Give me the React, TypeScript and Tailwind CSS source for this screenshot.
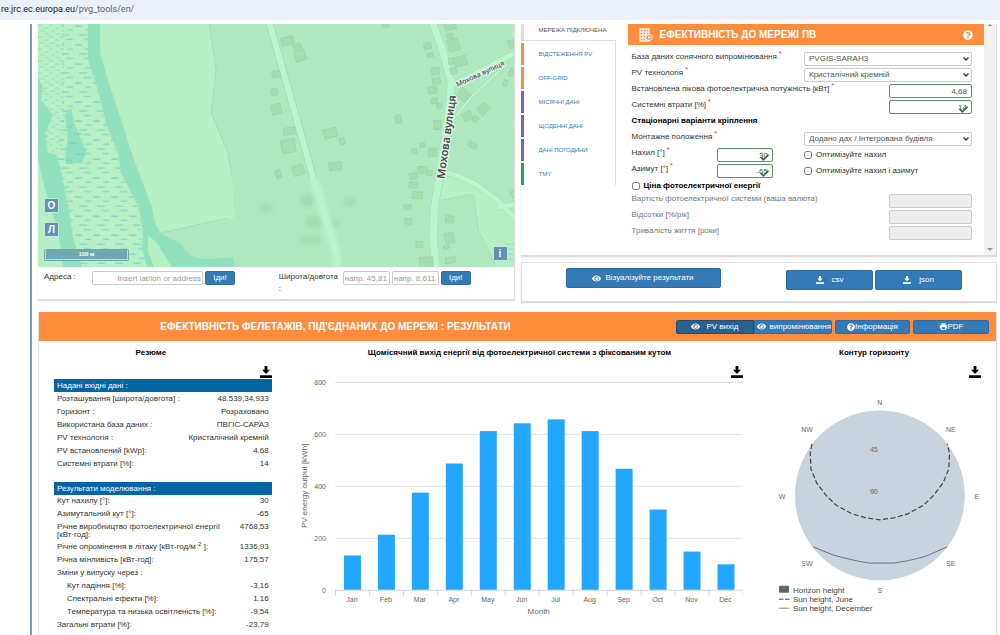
import type { ReactNode } from "react";
import { FaCheck, FaEye, FaQuestionCircle } from "react-icons/fa";
import { MdPrint } from "react-icons/md";

const navItems = [
    { label: "ВІДСТЕЖЕННЯ PV", bar: "bg-[#fb8c3c]" },
    { label: "OFF-GRID", bar: "bg-[#fb8c3c]" },
    { label: "МІСЯЧНІ ДАНІ", bar: "bg-[#7565b0]" },
    { label: "ЩОДЕННІ ДАНІ", bar: "bg-[#7565b0]" },
    { label: "ДАНІ ПОГОДИНИ", bar: "bg-[#7565b0]" },
    { label: "TMY", bar: "bg-[#2ca05a]" },
];

const inputRows = [
    ["Розташування [широта/довгота] :", "48.539,34.933"],
    ["Горизонт :", "Розраховано"],
    ["Використана база даних :", "ПВГІС-САРАЗ"],
    ["PV технологія :", "Кристалічний кремній"],
    ["PV встановлений [kWp]:", "4.68"],
    ["Системні втрати [%]:", "14"],
];

const resultRows: { label: ReactNode; value: string; indent?: boolean }[] = [
    { label: "Кут нахилу [°]:", value: "30" },
    { label: "Азимутальний кут [°]:", value: "-65" },
    { label: "Річне виробництво фотоелектричної енергії [кВт·год]:", value: "4768,53" },
    { label: <>Річне опромінення в літаку [кВт-год/м <sup className="text-[6px]">2</sup> ]:</>, value: "1336,93" },
    { label: "Річна мінливість [кВт-год]:", value: "175,57" },
    { label: "Зміни у випуску через :", value: "" },
    { label: "Кут падіння [%]:", value: "-3,16", indent: true },
    { label: "Спектральні ефекти [%]:", value: "1.16", indent: true },
    { label: "Температура та низька освітленість [%]:", value: "-9,54", indent: true },
    { label: "Загальні втрати [%]:", value: "-23,79" },
];

const months = [
    { name: "Jan", value: 132 },
    { name: "Feb", value: 212 },
    { name: "Mar", value: 374 },
    { name: "Apr", value: 486 },
    { name: "May", value: 611 },
    { name: "Jun", value: 641 },
    { name: "Jul", value: 656 },
    { name: "Aug", value: 611 },
    { name: "Sep", value: 466 },
    { name: "Oct", value: 309 },
    { name: "Nov", value: 147 },
    { name: "Dec", value: 98 },
];

// x, y, width, height, rotation
const buildings = [
    [249, 17, 12, 8, -14], [259, 23, 8, 6, -20], [262, 32, 11, 10, -20],
    [238, 50, 8, 6, -14], [236, 68, 6, 7, -16], [238, 85, 10, 10, -14],
    [251, 107, 11, 7, -8], [250, 122, 14, 13, -10], [260, 146, 11, 10, -16], [240, 150, 5, 8, -16],
    [292, 109, 13, 9, -14], [304, 117, 5, 7, -16], [297, 142, 12, 8, -10], [360, 95, 6, 8, -14],
    [347, 1, 7, 4, -10], [389, 22, 7, 6, -14], [392, 31, 6, 4, -14], [397, 47, 8, 7, -8],
    [398, 57, 8, 6, -8], [394, 66, 9, 7, -8], [396, 77, 6, 5, -8], [401, 82, 5, 5, -8],
    [399, 101, 7, 9, 0], [412, 2, 11, 7, -12], [411, 12, 6, 5, -12], [415, 21, 11, 12, -16],
    [413, 37, 6, 6, -12], [422, 37, 12, 9, -14], [415, 47, 6, 6, -12], [425, 71, 11, 10, 40],
    [445, 85, 11, 9, -45], [429, 92, 9, 8, -30], [437, 95, 5, 6, 40], [434, 121, 9, 5, 30],
    [394, 128, 8, 8, 4], [384, 121, 5, 4, -10], [376, 127, 5, 5, -6], [384, 146, 9, 7, 0],
    [375, 152, 7, 6, -10], [391, 149, 5, 5, 0], [375, 161, 9, 6, 4], [379, 171, 10, 7, 4],
    [369, 183, 7, 5, 4], [370, 197, 7, 6, 4], [381, 220, 7, 6, 0], [388, 238, 13, 10, -4],
    [411, 195, 8, 7, 8], [411, 214, 9, 10, -10], [408, 223, 6, 3, -10], [412, 236, 10, 6, -8],
    [473, 20, 6, 8, -14], [467, 59, 4, 6, 20], [473, 48, 4, 8, 20], [475, 170, 5, 7, -30],
];

function DownloadIcon({ className }: { className: string }) {
    return (
        <svg viewBox="0 0 12 12" className={className} fill="currentColor" aria-hidden="true">
            <path d="M4.6 0h2.8v3.8H10L6 8 2 3.8h2.6zM0 9.2h12V12H0z" />
        </svg>
    );
}

function MapView() {
    return (
        <div className="relative h-[243px] overflow-hidden bg-[#b5efc3]">
            <svg viewBox="0 0 475 243" preserveAspectRatio="xMinYMin slice" className="h-full w-full">
                <defs>
                    <pattern id="marsh" width="18" height="19" patternUnits="userSpaceOnUse">
                        <path d="M1 2h7M11 6h6M5 11h8M10 15.500h7" stroke="#74cfcb" strokeWidth="1" />
                    </pattern>
                    <pattern id="marshDense" width="11" height="12" patternUnits="userSpaceOnUse">
                        <path d="M0 1h4M6 4h4M2 7h4M7 10h4" stroke="#7ed2c6" strokeWidth=".7" />
                    </pattern>
                    <filter id="soft">
                        <feGaussianBlur stdDeviation="2" />
                    </filter>
                </defs>
                <path d="M171 0L178 46L173 89L190 129L194 154L196 194L122 209L142 219L152 231L165 235L195 233L197 243H475V0Z" fill="#afe7c0" />
                <path d="M171 0L178 46L173 89L190 129L194 154M122 209L190 194" fill="none" stroke="#9fd6b0" strokeWidth=".8" />
                <path d="M407 150L440 162L475 190V243H458L440 206L435 170L402 176Z" fill="#b5efc3" />
                <path d="M402 176L435 170L440 206L458 243" fill="none" stroke="#9fd6b0" strokeWidth=".7" />

                <path d="M24 0H50V36L59 63L69 103L80 129L83 149L101 184L104 223L109 243H44L35 213L29 176L19 131L24 90Z" fill="url(#marsh)" />
                <path d="M0 0H26V90L24 130L9 128L7 109L15 91L3 76L5 63L0 54Z" fill="url(#marshDense)" />
                <path d="M0 54L5 63L3 76L15 91L7 109L9 128L19 131L25 156L29 176L35 213L44 243H25L20 206L10 176L0 136Z" fill="#91e1c0" />
                <path d="M33 84L35 96L45 119L48 129L44 139H27L30 109L27 91Z" fill="#91e1c0" />
                <path d="M28 103h6M36 110h8M31 119h8M38 130h8M28 136h6" stroke="#74cfcb" />
                <path d="M50 0H62V29L72 63L84 99L95 133L114 184L117 199L122 209L142 219L152 231L165 235L195 233L197 243H109L104 223L105 211L101 184L83 149L80 129L69 103L59 63L50 36Z" fill="#91e1c0" />
                <path d="M110 211L119 219L134 243H116L110 228Z" fill="#b5efc3" />

                <g fill="#a5ddb2" filter="url(#soft)">
                    <path d="M222 180h12v8h-12zM262 170h14v12h-14zM306 174h12v8h-12zM268 192h16v12h-16zM262 212h20v8h-20zM292 194h8v10h-8z" />
                </g>
                <g fill="none" stroke="#a2dbb4" strokeLinejoin="round">
                    <path d="M231 -2L275 154" strokeWidth="8" />
                    <path d="M394 -2L404 26L413 59L411 80L401 152L396 183L395 216L398 245" strokeWidth="8" />
                    <path d="M414 61L440 48L478 28" strokeWidth="6" />
                    <path d="M405 148L420 152L439 161L459 176L480 198M459 183L480 180" strokeWidth="6" />
                    <path d="M414 96L432 74L465 43" strokeWidth="3" />
                </g>
                <g fill="none" stroke="#b9f5ce" strokeLinejoin="round">
                    <path d="M231 -2L275 154" strokeWidth="6" />
                    <path d="M275 154L285 186L297 226L300 243" strokeWidth="8" filter="url(#soft)" />
                    <path d="M394 -2L404 26L413 59L411 80L401 152L396 183L395 216L398 245" strokeWidth="7" />
                    <path d="M414 61L440 48L478 28" strokeWidth="5" />
                    <path d="M405 148L420 152L439 161L459 176L480 198M459 183L480 180" strokeWidth="5" />
                    <path d="M414 96L432 74L465 43" strokeWidth="2" />
                </g>
                <g fill="#a5dfb1" stroke="#9bd0a6" strokeWidth=".7">
                    {buildings.map(([x, y, w, h, r], i) => (
                        <rect key={i} x={x - w / 2} y={y - h / 2} width={w} height={h} transform={`rotate(${r} ${x} ${y})`} />
                    ))}
                </g>
                <path d="M467 220h8M465 225h10M468 230h7M466 235h9" stroke="#7fd6c4" strokeWidth=".8" />
                <g className="font-['Noto_Sans',sans-serif]" fill="#4c4750" stroke="#e6f8ea" strokeWidth="2" paintOrder="stroke">
                    <text x="419" y="63" fontSize="7" fontWeight="500" transform="rotate(-25 419 63)">Мохова вулиця</text>
                    <text x="406" y="155" fontSize="11" fontWeight="600" transform="rotate(-82 406 155)">Мохова вулиця</text>
                </g>
            </svg>
            <button className="absolute top-[174px] left-1.5 size-[15px] rounded-xs border border-[#c5e6dc] bg-[#5e93b4] text-[10px] leading-3 font-bold text-white">О</button>
            <button className="absolute top-[198px] left-1.5 size-[15px] rounded-xs border border-[#c5e6dc] bg-[#5e93b4] text-[10px] leading-3 font-bold text-white">Л</button>
            <div className="absolute bottom-1.5 left-1.5 w-[85px] rounded-xs bg-[#6fa9b0] p-px">
                <div className="border border-t-0 border-[#b5dcd8] text-center text-[6px] leading-[9px] font-bold text-white">100 м</div>
            </div>
            <button className="absolute right-1.5 bottom-1.5 size-[15px] rounded-xs border border-[#c5e6dc] bg-[#5e93b4] text-[10px] leading-3 font-bold text-white">i</button>
        </div>
    );
}

function Star() {
    return <sup className="ml-0.5 text-[7px] text-[#d03a2e]">*</sup>;
}

function SelectRow({ id, label, value }: { id: string; label: string; value: string }) {
    return (
        <div className="grid h-4 grid-cols-[1fr_168px]">
            <label htmlFor={id} className="leading-3">{label}<Star /></label>
            <div className="relative">
                <select id={id} className="mt-px block h-[14px] w-full appearance-none rounded-xs border border-[#ccc] bg-white pl-1 text-[#555]">
                    <option>{value}</option>
                </select>
                <svg viewBox="0 0 6 4" className="pointer-events-none absolute top-1.5 right-[3px] h-1 w-1.5" fill="none" stroke="#333" strokeWidth="1.3">
                    <path d="M.5 .5L3 3L5.500 .5" />
                </svg>
            </div>
        </div>
    );
}

function ValidInput({ id, value, width, checked }: { id: string; value: string; width: string; checked?: boolean }) {
    return (
        <div className={`relative ${width}`}>
            <input id={id} defaultValue={value} className="mt-px block h-[14px] w-full rounded-xs border border-[#5d9463] bg-white px-1 text-right text-[#555]" />
            {checked && <FaCheck className="absolute top-1.5 right-1 size-[9px] text-[#2f7d3b]" />}
        </div>
    );
}

function NavTabs() {
    return (
        <nav className="w-[95px] shrink-0 text-[6px]">
            <a href="#grid" className="flex h-[17px] text-[#555]">
                <span className="w-[3px] bg-[#ddd]" />
                <span className="flex-1 border-b border-[#ddd] pl-[15px] leading-3 whitespace-nowrap">МЕРЕЖА ПІДКЛЮЧЕНА</span>
            </a>
            <div className="border-r border-[#ddd]">
                {navItems.map((item) => (
                    <a key={item.label} href="#tool" className="flex h-6 pt-0.5 text-[#337ab7]">
                        <span className={`w-[3px] ${item.bar}`} />
                        <span className="pl-[15px] leading-[22px] whitespace-nowrap">{item.label}</span>
                    </a>
                ))}
            </div>
        </nav>
    );
}

function PvForm() {
    return (
        <div className="min-w-0 flex-1">
            <div className="flex h-[21px] items-center bg-[#ff8c3c] px-[11px] text-white">
                <svg viewBox="0 0 14 14" className="size-[14px]" fill="none" stroke="currentColor">
                    <path d="M1 1h9v12H1zM1 4h9M1 7h9M1 10h9M4 1v12M7 1v12" strokeWidth="1.300" opacity=".9" />
                    <circle cx="10" cy="9.500" r="3.200" fill="#ff8c3c" />
                    <path d="M9 7.500v4l3-2z" fill="currentColor" stroke="none" />
                </svg>
                <h2 className="ml-[7px] flex-1 text-[10px] font-bold">ЕФЕКТИВНІСТЬ ДО МЕРЕЖІ ПВ</h2>
                <FaQuestionCircle className="size-[10px]" />
            </div>
            <form className="pt-1.5 pr-3 pb-3.5 pl-1 text-[8px] text-[#333]">
                <SelectRow id="db" label="База даних сонячного випромінювання" value="PVGIS-SARAH3" />
                <SelectRow id="tech" label="PV технологія" value="Кристалічний кремній" />
                <div className="flex h-4 justify-between">
                    <label htmlFor="peak" className="leading-3">Встановлена пікова фотоелектрична потужність [кВт]<Star /></label>
                    <ValidInput id="peak" value="4,68" width="w-[83px]" />
                </div>
                <div className="flex h-4 justify-between">
                    <label htmlFor="loss" className="leading-3">Системні втрати [%]<Star /></label>
                    <ValidInput id="loss" value="14" width="w-[83px]" checked />
                </div>
                <h3 className="h-4 leading-3 font-bold text-black">Стаціонарні варіанти кріплення</h3>
                <SelectRow id="mount" label="Монтажне положення" value="Додано дах / Інтегрована будівля" />
                <div className="grid h-4 grid-cols-[1fr_168px]">
                    <div className="flex justify-between pr-[31px]">
                        <label htmlFor="slope" className="leading-3">Нахил [°]<Star /></label>
                        <ValidInput id="slope" value="30" width="w-14" checked />
                    </div>
                    <label className="flex items-center gap-1">
                        <input type="checkbox" className="size-2" />
                        Оптимізуйте нахил
                    </label>
                </div>
                <div className="grid h-4 grid-cols-[1fr_168px]">
                    <div className="flex justify-between pr-[31px]">
                        <label htmlFor="azimuth" className="leading-3">Азимут [°]<Star /></label>
                        <ValidInput id="azimuth" value="-65" width="w-14" checked />
                    </div>
                    <label className="flex items-center gap-1">
                        <input type="checkbox" className="size-2" />
                        Оптимізуйте нахил і азимут
                    </label>
                </div>
                <label className="flex h-[14px] items-center gap-1 font-bold text-black">
                    <input type="checkbox" className="size-2" />
                    Ціна фотоелектричної енергії
                </label>
                {["Вартість фотоелектричної системи (ваша валюта)", "Відсотки [%/рік]", "Тривалість життя [роки]"].map((label) => (
                    <label key={label} className="flex h-4 justify-between leading-3 text-[#777]">
                        {label}
                        <input disabled className="mt-px h-[14px] w-[83px] rounded-xs border border-[#ccc] bg-[#eee]" />
                    </label>
                ))}
            </form>
        </div>
    );
}

function MonthlyChart() {
    const slot = 34;
    return (
        <svg viewBox="0 0 448 240" className="w-full" fill="#666">
            {[0, 200, 400, 600, 800].map((v) => (
                <g key={v}>
                    <path d={`M39 ${211.5 - v * 0.26}H447`} stroke={v ? "#e3e3e3" : "#ccd6eb"} />
                    <text x="30" y={214 - v * 0.26} fontSize="7" textAnchor="end">{v}</text>
                </g>
            ))}
            {months.map((m, i) => (
                <g key={m.name}>
                    <path d={`M${39.5 + i * slot} 211v6`} stroke="#ccd6eb" />
                    <rect x={48 + i * slot} y={211 - m.value * 0.26} width="17" height={m.value * 0.26} fill="#22a7ff" />
                    <text x={56 + i * slot} y="223" fontSize="7" textAnchor="middle">{m.name}</text>
                </g>
            ))}
            <path d="M447.500 211v6" stroke="#ccd6eb" />
            <text x="243" y="235" fontSize="8" textAnchor="middle">Month</text>
            <text x="11" y="107" fontSize="8" textAnchor="middle" transform="rotate(-90 11 107)">PV energy output [kWh]</text>
        </svg>
    );
}

const compass: [string, number, number][] = [
    ["N", 113, 26], ["NE", 184, 53], ["E", 210, 120], ["SE", 184, 187],
    ["S", 113, 214], ["SW", 40, 187], ["W", 15, 120], ["NW", 40, 53],
    ["45", 107, 73], ["90", 107, 115],
];

function HorizonChart() {
    return (
        <svg viewBox="0 0 214 240" className="w-full" fill="#666">
            <circle cx="113" cy="116.500" r="85" fill="#c8d3dd" />
            <path d="M45 65L43.300 74L44 90L49.700 104L58.700 116L68.700 126L85 135L99 139L113 141L127 139L141 135L157.300 126L167.300 116L176.300 104L182 90L182.700 74L180.300 65" fill="none" stroke="#444" strokeWidth="1.200" strokeDasharray="5 2.500" />
            <path d="M46 168L57 172.500L67 176.500L87 181.500L102 184.300H127L142 181.800L159 177.500L180.500 168" fill="none" stroke="#6b7580" />
            {compass.map(([label, x, y]) => (
                <text key={label} x={x} y={y} fontSize="7" textAnchor="middle">{label}</text>
            ))}
            <path d="M12 207h10v7H12z" />
            <path d="M12 220.500h4.500M18 220.500h4.500" stroke="#444" />
            <path d="M12 229.500h10" stroke="#999" />
            <g fontSize="8" fill="#444">
                <text x="26" y="214">Horizon height</text>
                <text x="26" y="223">Sun height, June</text>
                <text x="26" y="232">Sun height, December</text>
            </g>
        </svg>
    );
}

function Summary() {
    return (
        <>
            <table className="w-full">
                <thead>
                    <tr className="h-[13px] bg-[#0565a5] text-left text-white">
                        <th colSpan={2} className="px-[3px] py-0 font-normal">Надані вхідні дані :</th>
                    </tr>
                </thead>
                <tbody>
                    {inputRows.map(([label, value]) => (
                        <tr key={label} className="h-[13px]">
                            <td className="px-[3px] py-0">{label}</td>
                            <td className="px-[3px] py-0 text-right">{value}</td>
                        </tr>
                    ))}
                </tbody>
            </table>
            <table className="mt-3 w-full">
                <thead>
                    <tr className="h-[13px] bg-[#0565a5] text-left text-white">
                        <th colSpan={2} className="px-[3px] py-0 font-normal">Результати моделювання :</th>
                    </tr>
                </thead>
                <tbody>
                    {resultRows.map((row) => (
                        <tr key={row.value} className="h-[13px] align-top leading-2">
                            <td className={row.indent ? "py-0.5 pl-[13px]" : "py-0.5 pl-[3px]"}>{row.label}</td>
                            <td className="px-[3px] py-0.5 text-right">{row.value}</td>
                        </tr>
                    ))}
                </tbody>
            </table>
        </>
    );
}

function ResultColumn({ title, titleClass, children }: { title: string; titleClass?: string; children: ReactNode }) {
    return (
        <section className="min-w-0">
            <h3 className={`text-center leading-4 font-bold text-black ${titleClass ?? ""}`}>{title}</h3>
            <div className="flex h-[18px] items-end justify-end pb-px">
                <button aria-label="Завантажити">
                    <DownloadIcon className="size-3 text-black" />
                </button>
            </div>
            {children}
        </section>
    );
}

const panel = "border border-[#ddd] bg-white shadow-[0_1px_1px_rgba(0,0,0,0.15)]";
const blueButton = "flex items-center justify-center rounded-xs border border-[#2e6da4] bg-[#337ab7] text-white";

export default function App() {
    return (
        <div className="flex min-h-screen flex-col bg-white font-['Liberation_Sans',Arial,sans-serif] text-[8px] text-[#333]">
            <header className="h-5 bg-[#ebf0fa] pl-px font-['Roboto',sans-serif] text-[9px] leading-[19px] text-[#5f6368]">
                <span className="text-[#202124]">re.jrc.ec.europa.eu</span>/pvg_tools/en/
            </header>
            <main className="mt-1 ml-[30px] flex flex-1 flex-col border-l-2 border-[#7f9db4] pr-[3px] pl-1.5">
                <div className="grid grid-cols-2 items-start gap-1.5">
                    <section className={`${panel} border-t-0 border-l-0`}>
                        <MapView />
                        <div className="grid h-8 grid-cols-2 pt-1 pl-1.5">
                            <form className="flex items-start gap-0.5">
                                <label htmlFor="address" className="w-[46px] leading-3">Адреса :</label>
                                <input id="address" placeholder="Insert lat/lon or address" className="h-[14px] w-[111px] rounded-xs border border-[#ccc] px-px text-right placeholder:text-[#999]" />
                                <button className={`${blueButton} h-[14px] w-[30px]`}>Іди!</button>
                            </form>
                            <form className="flex items-start gap-0.5">
                                <label htmlFor="lat" className="w-[62px] leading-3">Широта/довгота :</label>
                                <input id="lat" placeholder="напр. 45,81" className="h-[14px] w-[47px] rounded-xs border border-[#ccc] px-px placeholder:text-[#999]" />
                                <input aria-label="Довгота" placeholder="напр. 8,611" className="h-[14px] w-[47px] rounded-xs border border-[#ccc] px-px placeholder:text-[#999]" />
                                <button className={`${blueButton} h-[14px] w-[30px]`}>Іди!</button>
                            </form>
                        </div>
                    </section>

                    <div className="flex flex-col gap-1.5">
                        <section className={`${panel} flex border-t-0 border-l-0`}>
                            <NavTabs />
                            <div className="w-3 shrink-0" />
                            <PvForm />
                            <div className="flex w-3 flex-col items-center justify-between bg-[#f1f1f1] pb-1">
                                <span className="border-x-2 border-b-2 border-x-transparent border-b-[#888]" />
                                <span className="border-x-3 border-t-3 border-x-transparent border-t-[#999]" />
                            </div>
                        </section>
                        <section className={`${panel} flex h-10 items-start justify-between pt-[5px] pr-[34px] pl-11`}>
                            <button className={`${blueButton} h-5 w-[155px] gap-1`}>
                                <FaEye className="size-[9px]" />
                                Візуалізуйте результати
                            </button>
                            <div className="mt-0.5 flex gap-0.5">
                                <button className={`${blueButton} h-5 w-[87px] gap-2`}>
                                    <DownloadIcon className="size-2" />
                                    csv
                                </button>
                                <button className={`${blueButton} h-5 w-[87px] gap-2`}>
                                    <DownloadIcon className="size-2" />
                                    json
                                </button>
                            </div>
                        </section>
                    </div>
                </div>

                <section className="mt-2.5 flex-1 border-r border-l border-[#ddd] bg-white">
                    <div className="flex h-[29px] items-center gap-11 bg-[#ff8c3c] pr-[7px]">
                        <h2 className="flex-1 text-center text-[10px] font-bold text-white">
                            ЕФЕКТИВНІСТЬ ФЕЛЕТАЖІВ, ПІД'ЄДНАНИХ ДО МЕРЕЖІ : РЕЗУЛЬТАТИ
                        </h2>
                        <div className="flex gap-[3px]">
                            <div className="flex">
                                <button className="flex h-[14px] w-[78px] items-center justify-center gap-1.5 rounded-l-xs border border-[#204d74] bg-[#286090] text-white">
                                    <FaEye className="size-[9px]" />
                                    PV вихід
                                </button>
                                <button className="flex h-[14px] w-[78px] items-center justify-end gap-1 rounded-r-xs border border-[#2e6da4] bg-[#337ab7] text-white">
                                    <FaEye className="size-[9px] shrink-0" />
                                    випромінювання
                                </button>
                            </div>
                            <button className={`${blueButton} h-[14px] w-[75px]`}>
                                <FaQuestionCircle className="size-2" />
                                Інформація
                            </button>
                            <button className={`${blueButton} h-[14px] w-[76px]`}>
                                <MdPrint className="size-[9px]" />
                                PDF
                            </button>
                        </div>
                    </div>
                    <div className="grid grid-cols-[218fr_448fr_214fr] gap-6 px-[15px] pt-1">
                        <ResultColumn title="Резюме" titleClass="pr-6">
                            <Summary />
                        </ResultColumn>
                        <ResultColumn title="Щомісячний вихід енергії від фотоелектричної системи з фіксованим кутом">
                            <MonthlyChart />
                        </ResultColumn>
                        <ResultColumn title="Контур горизонту">
                            <HorizonChart />
                        </ResultColumn>
                    </div>
                </section>
            </main>
        </div>
    );
}
